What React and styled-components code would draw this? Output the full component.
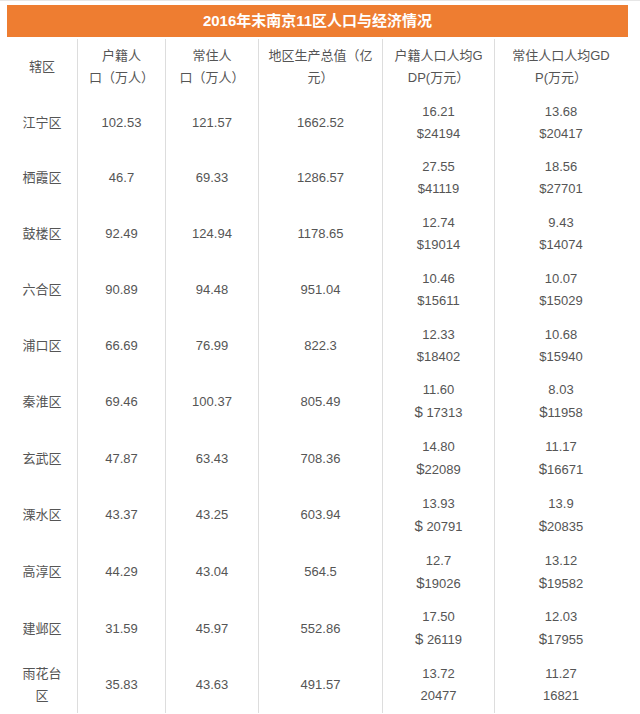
import React from 'react';
import styled, { createGlobalStyle } from 'styled-components';

const GlobalStyle = createGlobalStyle`
  body {
    margin: 0;
    background: #fff;
    font-family: "Liberation Sans", Arial, "Noto Sans CJK SC", sans-serif;
  }
`;

const Page = styled.div`
  border-top: 1px solid #e6e6e6;
  padding: 4px 0 0 7px;
`;

const Title = styled.div`
  width: 621px;
  height: 32px;
  background: #ee7d31;
  color: #fff;
  font-weight: bold;
  font-size: 15px;
  line-height: 32px;
  text-align: center;
`;

const Table = styled.table`
  width: 620px;
  table-layout: fixed;
  border-collapse: separate;
  border-spacing: 0;
  margin-top: 2px;
  color: #555;
  font-size: 13px;
`;

const Cell = styled.td`
  padding: 5.875px 4px;
  line-height: 22px;
  text-align: center;
  vertical-align: middle;
  border-right: 1px solid #ddd;

  &:last-child {
    border-right: none;
  }
`;

const Dollar = styled.span`
  font-size: ${({ $big }) => ($big ? '15px' : '13px')};
`;

const widths = [71, 88, 93, 124, 112, 132];

const rows = [
  ['江宁区', '102.53', '121.57', '1662.52', ['16.21', '$24194'], ['13.68', '$20417']],
  ['栖霞区', '46.7', '69.33', '1286.57', ['27.55', '$41119'], ['18.56', '$27701']],
  ['鼓楼区', '92.49', '124.94', '1178.65', ['12.74', '$19014'], ['9.43', '$14074']],
  ['六合区', '90.89', '94.48', '951.04', ['10.46', '$15611'], ['10.07', '$15029']],
  ['浦口区', '66.69', '76.99', '822.3', ['12.33', '$18402'], ['10.68', '$15940']],
  ['秦淮区', '69.46', '100.37', '805.49', ['11.60', '$ 17313'], ['8.03', '$11958'], true],
  ['玄武区', '47.87', '63.43', '708.36', ['14.80', '$22089'], ['11.17', '$16671'], true],
  ['溧水区', '43.37', '43.25', '603.94', ['13.93', '$ 20791'], ['13.9', '$20835'], true],
  ['高淳区', '44.29', '43.04', '564.5', ['12.7', '$19026'], ['13.12', '$19582'], true],
  ['建邺区', '31.59', '45.97', '552.86', ['17.50', '$ 26119'], ['12.03', '$17955'], true],
  [['雨花台', '区'], '35.83', '43.63', '491.57', ['13.72', '20477'], ['11.27', '16821']],
];

function Lines({ value, big }) {
  if (!Array.isArray(value)) return value;
  return value.map((line, i) => (
    <React.Fragment key={i}>
      {i > 0 && <br />}
      {line.startsWith('$') ? (
        <>
          <Dollar $big={big}>$</Dollar>
          {line.slice(1)}
        </>
      ) : (
        line
      )}
    </React.Fragment>
  ));
}

export default function App() {
  const header = [
    '辖区',
    ['户籍人', '口（万人）'],
    ['常住人', '口（万人）'],
    ['地区生产总值（亿', '元）'],
    ['户籍人口人均G', 'DP(万元）'],
    ['常住人口人均GD', 'P(万元）'],
  ];

  return (
    <>
      <GlobalStyle />
      <Page>
        <Title>2016年末南京11区人口与经济情况</Title>
        <Table>
          <colgroup>
            {widths.map((w, i) => (
              <col key={i} style={{ width: w }} />
            ))}
          </colgroup>
          <tbody>
            <tr>
              {header.map((h, i) => (
                <Cell key={i}>
                  <Lines value={h} />
                </Cell>
              ))}
            </tr>
            {rows.map((r, ri) => (
              <tr key={ri}>
                {r.slice(0, 6).map((v, ci) => (
                  <Cell key={ci}>
                    <Lines value={v} big={r[6]} />
                  </Cell>
                ))}
              </tr>
            ))}
          </tbody>
        </Table>
      </Page>
    </>
  );
}
